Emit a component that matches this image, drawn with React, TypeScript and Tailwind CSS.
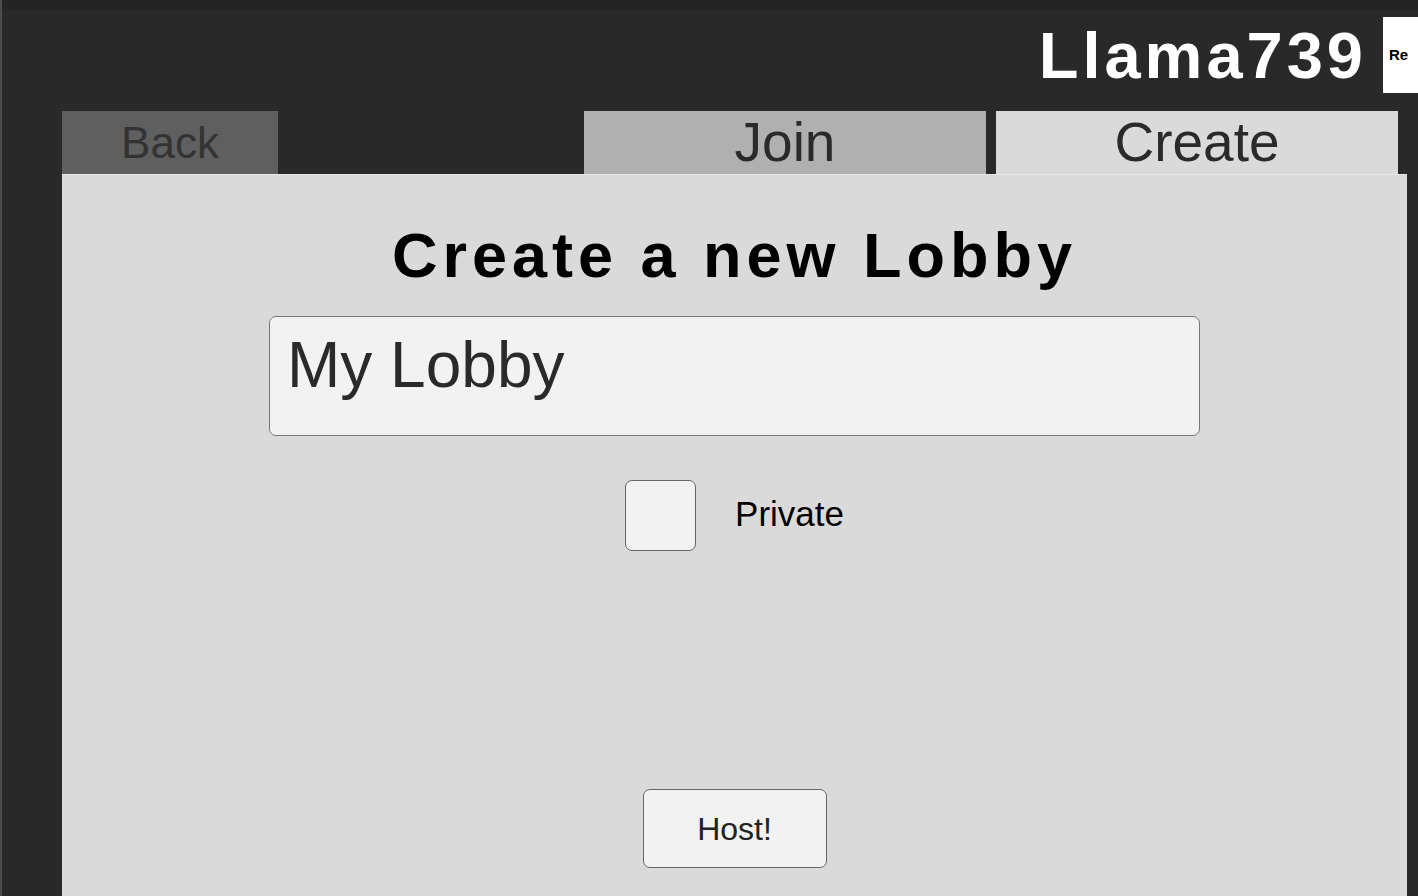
import { useState } from 'react'

const font = { fontFamily: '"Liberation Sans", Arial, sans-serif' }

function Tab({ label, className }: { label: string; className: string }) {
  return (
    <div className={`flex items-center justify-center h-[63px] ${className}`}>
      <span className="leading-none">{label}</span>
    </div>
  )
}

export default function App() {
  const [name, setName] = useState('My Lobby')
  const [priv, setPriv] = useState(false)

  return (
    <div
      className="w-[1418px] h-[896px] overflow-hidden bg-[#292929] border-l-2 border-[#4c4c4c] flex flex-col"
      style={font}
    >
      {/* top strip */}
      <div className="h-[9px] bg-[#242424] shrink-0" />

      {/* header */}
      <div className="h-[102px] shrink-0 flex items-start justify-end">
        <div className="mt-[14px] mr-[16px] text-white font-bold text-[65px] leading-[66px] tracking-[4px]">
          Llama739
        </div>
        <div className="mt-[8px] w-[35px] h-[76px] bg-white flex items-center pl-[6px] overflow-hidden shrink-0">
          <span className="text-black font-bold text-[15px] whitespace-nowrap">Re</span>
        </div>
      </div>

      {/* tabs */}
      <div className="h-[63px] shrink-0 flex pl-[60px]">
        <Tab label="Back" className="w-[216px] bg-[#5f5f5f] text-[#333] text-[44px]" />
        <div className="w-[306px]" />
        <Tab label="Join" className="w-[402px] bg-[#b0b0b0] text-[#2a2a2a] text-[55px]" />
        <div className="w-[10px]" />
        <Tab label="Create" className="w-[402px] bg-[#dadada] text-[#2a2a2a] text-[55px]" />
      </div>

      {/* panel */}
      <div className="ml-[60px] w-[1345px] flex-1 bg-[#dadada] border-t border-[#e8e8e8] flex flex-col items-center">
        <h1 className="mt-[45px] text-black font-bold text-[63px] leading-[70px] tracking-[5px]">
          Create a new Lobby
        </h1>

        <input
          value={name}
          onChange={(e) => setName(e.target.value)}
          className="mt-[26px] w-[931px] h-[120px] bg-[#f2f2f2] border border-[#777] rounded-[7px] pl-[17px] pb-[22px] text-[64px] text-[#2a2a2a] outline-none"
          style={font}
        />

        <label className="mt-[44px] flex items-center gap-[39px] cursor-pointer">
          <button
            onClick={() => setPriv(!priv)}
            className="w-[71px] h-[71px] bg-[#f2f2f2] border border-[#666] rounded-[7px] flex items-center justify-center text-[44px] text-[#333]"
          >
            {priv ? '✓' : ''}
          </button>
          <span className="text-[35px] text-black pb-[2px]">Private</span>
        </label>

        <button className="mt-[238px] w-[184px] h-[79px] bg-[#f2f2f2] border border-[#666] rounded-[7px] text-[32px] text-[#222]">
          Host!
        </button>
      </div>
    </div>
  )
}
